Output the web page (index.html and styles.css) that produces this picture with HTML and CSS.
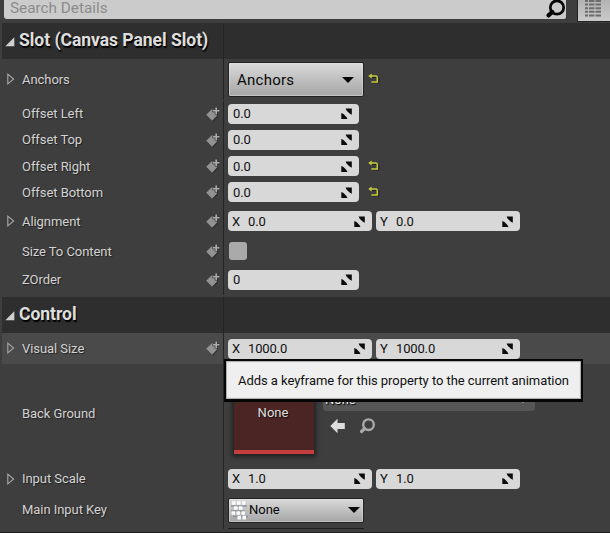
FILE: index.html
```html
<!DOCTYPE html>
<html lang="en">
<head>
<meta charset="utf-8">
<title>Details</title>
<link rel="stylesheet" href="styles.css">
</head>
<body>
<svg width="0" height="0" class="defs">
  <symbol id="key" viewBox="0 0 14 15"><path d="M.3 8 6 2.5H11V9.2L6.5 14.2Z" fill="#222" opacity=".6" transform="translate(.5 .5)"/><path d="M.2 7.7 5.8 2.3H10.8V8.8L6.1 13.7Z" fill="#929292"/><path d="M10.2 0V7.6M6.4 3.8H14" stroke="#3a3a3a" stroke-width="3"/><path d="M10.2 .6V7M7 3.8H13.4" stroke="#acacac" stroke-width="1.6"/></symbol>
  <symbol id="spin" viewBox="0 0 12 12"><path d="M4.6.5H10.8V6.7L8.6 5.6 5.7 2.7ZM.3 4.9 2.5 6 5.4 8.9 6.5 11.1H.3Z" fill="#0b0b0b"/></symbol>
  <symbol id="reset" viewBox="0 0 12 12"><path d="M2.5 3.5H8.6Q10 3.5 10 5V9H4" fill="none" stroke="#111" stroke-width="1.5" opacity=".6" transform="translate(.6 .8)"/><path d="M2 3.1H7.8Q9.3 3.1 9.3 4.6V9H3.4" fill="none" stroke="#c5ce3c" stroke-width="1.5"/><path d="M.3 3.1 3.7.6V5.6Z" fill="#c5ce3c"/></symbol>
  <symbol id="closed" viewBox="0 0 8 12"><path d="M.8 1.2 6.6 6 .8 10.8Z" fill="none" stroke="#a8a8a8" stroke-width="1.1"/></symbol>
  <symbol id="open" viewBox="0 0 10 10"><path d="M9.3.3V9.3H.3Z" fill="#d0d0d0"/></symbol>
</svg>
<div class="panel">
  <div class="top">
    <div class="search"><span>Search Details</span>
      <svg width="22" height="20" viewBox="0 0 22 20"><circle cx="12" cy="7.5" r="6.7" fill="none" stroke="#050505" stroke-width="2.7"/><path d="M7.3 12 3.5 15.4" stroke="#050505" stroke-width="4.2" stroke-linecap="round"/></svg>
    </div>
    <div class="view"><svg width="18" height="18" viewBox="0 0 18 18"><path d="M1 1H4M5 1H10.5M11.5 1H17M1 4.5H4M5 4.5H10.5M11.5 4.5H17M1 8.2H4M5 8.2H10.5M11.5 8.2H17M1 11.8H4M5 11.8H10.5M11.5 11.8H17M1 15.5H4M5 15.5H10.5M11.5 15.5H17" stroke="#6d6d6d" stroke-width="2"/></svg></div>
  </div>

  <div class="row head"><div class="name"><svg class="tri" width="10" height="10"><use href="#open"/></svg><b>Slot (Canvas Panel Slot)</b></div><div class="value"></div></div>
  <div class="row anchors"><div class="name"><svg class="exp" width="8" height="12"><use href="#closed"/></svg><span>Anchors</span></div><div class="value"><div class="button big"><span>Anchors</span><i class="caret"></i></div><svg class="reset" width="12" height="12"><use href="#reset"/></svg></div></div>
  <div class="row"><div class="name"><span>Offset Left</span><svg class="key" width="14" height="15"><use href="#key"/></svg></div><div class="value"><div class="field">0.0<svg width="12" height="12"><use href="#spin"/></svg></div></div></div>
  <div class="row"><div class="name"><span>Offset Top</span><svg class="key" width="14" height="15"><use href="#key"/></svg></div><div class="value"><div class="field">0.0<svg width="12" height="12"><use href="#spin"/></svg></div></div></div>
  <div class="row low"><div class="name"><span>Offset Right</span><svg class="key" width="14" height="15"><use href="#key"/></svg></div><div class="value"><div class="field">0.0<svg width="12" height="12"><use href="#spin"/></svg></div><svg class="reset far" width="12" height="12"><use href="#reset"/></svg></div></div>
  <div class="row low"><div class="name"><span>Offset Bottom</span><svg class="key" width="14" height="15"><use href="#key"/></svg></div><div class="value"><div class="field">0.0<svg width="12" height="12"><use href="#spin"/></svg></div><svg class="reset far" width="12" height="12"><use href="#reset"/></svg></div></div>
  <div class="row align low"><div class="name"><svg class="exp" width="8" height="12"><use href="#closed"/></svg><span>Alignment</span><svg class="key" width="14" height="15"><use href="#key"/></svg></div><div class="value"><div class="field wide"><em>X</em>0.0<svg width="12" height="12"><use href="#spin"/></svg></div><div class="field wide"><em>Y</em>0.0<svg width="12" height="12"><use href="#spin"/></svg></div></div></div>
  <div class="row size"><div class="name"><span>Size To Content</span><svg class="key" width="14" height="15"><use href="#key"/></svg></div><div class="value"><div class="check"></div></div></div>
  <div class="row zorder"><div class="name"><span>ZOrder</span><svg class="key" width="14" height="15"><use href="#key"/></svg></div><div class="value"><div class="field">0<svg width="12" height="12"><use href="#spin"/></svg></div></div></div>

  <div class="row head second"><div class="name"><svg class="tri" width="10" height="10"><use href="#open"/></svg><b>Control</b></div><div class="value"></div></div>
  <div class="row visual"><div class="name"><svg class="exp" width="8" height="12"><use href="#closed"/></svg><span>Visual Size</span><svg class="key" width="14" height="15"><use href="#key"/></svg></div><div class="value"><div class="field wide"><em>X</em>1000.0<svg width="12" height="12"><use href="#spin"/></svg></div><div class="field wide"><em>Y</em>1000.0<svg width="12" height="12"><use href="#spin"/></svg></div></div></div>
  <div class="row back"><div class="name"><span>Back Ground</span></div><div class="value">
    <div class="thumb">None</div>
    <div class="asset">
      <div class="picker"><span>None</span><i></i></div>
      <div class="tools">
        <svg width="16" height="16" viewBox="0 0 16 16"><path d="M.3 8 7.5.8V5H14.8V11H7.5V15.2Z" fill="#dedede"/></svg>
        <svg width="17" height="16" viewBox="0 0 17 16"><circle cx="9.5" cy="6.7" r="5.3" fill="none" stroke="#a9a9a9" stroke-width="2.4"/><path d="M5.5 10.8 2.5 13.5" stroke="#a9a9a9" stroke-width="3.2" stroke-linecap="round"/></svg>
      </div>
    </div>
  </div></div>
  <div class="row scale"><div class="name"><svg class="exp" width="8" height="12"><use href="#closed"/></svg><span>Input Scale</span></div><div class="value"><div class="field wide"><em>X</em>1.0<svg width="12" height="12"><use href="#spin"/></svg></div><div class="field wide"><em>Y</em>1.0<svg width="12" height="12"><use href="#spin"/></svg></div></div></div>
  <div class="row main"><div class="name"><span>Main Input Key</span></div><div class="value"><div class="button small">
    <svg width="19" height="20" viewBox="0 0 19 20"><path d="M1 6H17M1 11H15M3 16.5H18" stroke="#8d9196" stroke-width="1.6"/><path d="M2 3H5.5M7 3H10.5M12 3H15.5M4 8H7.5M9 8H12.5M1.5 13H5M6.5 13H10M11.5 13H15M7.5 17.6H11M12.5 17.6H16" stroke="#f7fafd" stroke-width="3.6"/></svg>
    <span>None</span><i class="caret"></i></div></div></div>
  <div class="row next"><div class="name"></div><div class="value"><div class="edge"></div></div></div>
  <div class="tooltip">Adds a keyframe for this property to the current animation</div>
</div>
</body>
</html>
```
FILE: styles.css
```css
* { box-sizing: border-box; }
body { margin: 0; background: #3e3e3e; font: 13px/16px Roboto, sans-serif; color: #d2d2d2; }
.defs { position: absolute; }
svg { flex: none; display: block; }
.panel { position: relative; width: 610px; height: 533px; overflow: hidden; padding-left: 2px; border-bottom: 1px solid #1c1c1c; }
.top { height: 23px; display: flex; padding-left: 2px; }
.search { flex: none; width: 562px; height: 19px; background: #cbcbcb; border-radius: 0 0 2px 3px; display: flex; justify-content: space-between; font-size: 15.3px; color: #8b8b8b; padding-left: 6px; }
.search svg { margin-right: -1px; }
.search span { margin-top: -1px; line-height: 18px; }
.view { flex: none; margin-left: 11px; width: 36px; height: 22px; border: 1px solid #222; border-top: 0; background: linear-gradient(#b2b2b2, #cacaca); padding-left: 6px; }

.row { display: flex; height: 26px; }
.name { width: 222px; border-right: 1px solid #242424; display: flex; align-items: center; position: relative; padding-left: 20px; text-shadow: 1px 1px 1px #222; letter-spacing: -.06px; }
.name .exp { margin: -1px 7px 0 -15px; }
.name .key { margin: 0 3px 0 auto; }
.value { flex: 1; display: flex; align-items: center; padding-left: 4px; gap: 4px; }
.head { height: 36px; background: #2e2e2e; }
.head .name { padding-left: 3px; }
.head b { font-size: 17.5px; line-height: 22px; margin: -2px 0 0 4px; letter-spacing: -.03px; color: #dedede; text-shadow: 1px 2px 1px #000; }
.tri { margin-top: 2px; }
.second { margin-top: 2px; }
.anchors { height: 42px; padding-bottom: 1px; }
.low .name span { margin-top: 1px; }
.low .field { padding-top: 1px; }
.align { height: 32px; }
.size { height: 28px; }
.size .name { padding-top: 1px; }
.zorder { height: 30px; }
.visual { height: 31px; background: #4a4a4a; }
.visual .value { padding-top: 1px; }
.back { height: 100px; }
.scale { height: 30px; }
.main { height: 32px; }
.next { height: 4px; }

.field { width: 131px; height: 20px; border-radius: 4px; background: #d8d8d8; color: #101010; display: flex; align-items: center; padding: 0 6px 0 5px; letter-spacing: -.15px; }
.field svg { margin-left: auto; }
.wide { width: 144px; padding-left: 4px; }
.field em { font-style: normal; width: 16px; }
.button { border: 1px solid #222; border-radius: 2px; background: linear-gradient(#dadada, #a5a5a5); box-shadow: inset 0 0 0 1px rgba(230,230,230,.45); color: #080808; display: flex; align-items: center; justify-content: space-between; }
.big { width: 136px; height: 35px; padding: 0 9px 0 8px; font-size: 15px; letter-spacing: .25px; }
.small { width: 136px; height: 25px; padding: 0 3px 0 1px; }
.small .caret { margin-left: auto; }
.caret { border: 6px solid transparent; border-top: 6px solid #060606; border-bottom: 0; }
.reset { margin: -1px 0 0; }
.far { margin: 0 0 0 5px; }
.check { width: 18px; height: 18px; margin-left: 1px; border-radius: 3px; background: #aaa; }
.thumb { width: 80px; height: 80px; margin: 0 0 1px 6px; background: #4b2424; border-bottom: 4px solid #c53e3e; box-shadow: 0 1px 4px 2px #222; text-align: center; padding-right: 2px; line-height: 77px; color: #ddd; text-shadow: 1px 1px 1px #111; }
.asset { margin-left: 5px; align-self: stretch; padding-top: 25px; }
.picker { width: 212px; height: 22px; border-radius: 4px; background: #565656; display: flex; align-items: center; justify-content: space-between; padding: 0 8px 0 2px; color: #e8e8e8; text-shadow: 1px 1px 1px #000; }
.picker i { border: 4px solid transparent; border-top: 5px solid #d0d0d0; border-bottom: 0; }
.tools { display: flex; gap: 13px; margin: 7px 0 0 7px; }
.next .value { align-items: flex-start; padding-top: 2px; }
.next .name { height: 3px; }
.edge { width: 136px; height: 1px; background: #202020; }
.tooltip { position: absolute; left: 224px; top: 359px; width: 359px; height: 43px; border: 2px solid #060606; border-bottom-width: 3px; background: #efefef; box-shadow: inset 0 0 1px 1px #aaa; color: #111; line-height: 40px; padding-left: 12px; white-space: nowrap; letter-spacing: -.055px; }
```
